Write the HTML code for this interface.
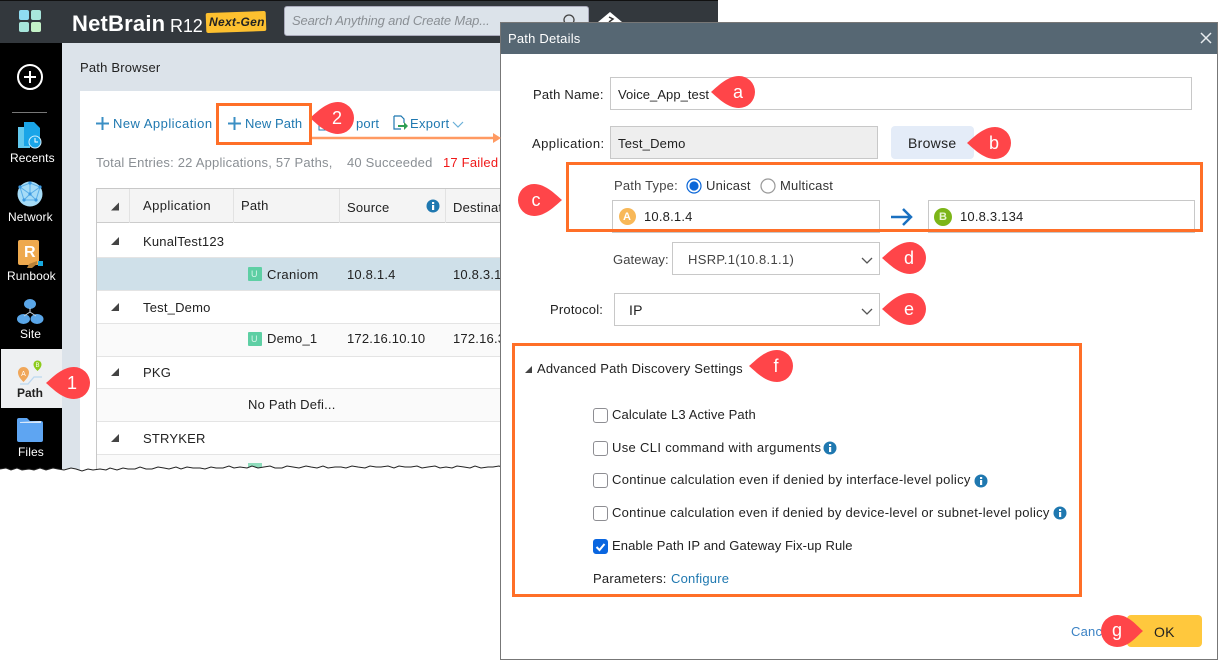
<!DOCTYPE html>
<html><head><meta charset="utf-8"><style>
html,body{margin:0;padding:0;background:#fff}
#p{position:relative;width:1218px;height:660px;overflow:hidden;background:#fff;font-family:"Liberation Sans",sans-serif;font-size:13px;color:#222}
#p div{position:absolute;box-sizing:border-box}
.t{position:absolute;white-space:nowrap;line-height:16px;letter-spacing:.2px}
.w{color:#fff;font-size:12px;letter-spacing:.1px}
.b{color:#1f78b0}
.g{color:#8a8f94}
.i{border:1px solid #c8c8c8;background:#fff}
.o{border:3px solid #ff6f28}
.h{height:1px;background:#e4e4e4;left:97px;width:403px}
.v{width:1px;background:#e2e2e2;top:189px;height:34px}
.c{width:15px;height:15px;left:593px;border:1px solid #8e8e93;border-radius:3px;background:#fff}
svg{position:absolute;overflow:visible}
</style></head><body><div id="p">

<div style="left:0;top:0;width:718px;height:470px;background:#dce3ea"></div>
<div style="left:0;top:0;width:718px;height:43px;background:#33383d;border-top:1px solid #111"></div>
<div style="left:0;top:43px;width:62px;height:427px;background:#000"></div>
<div style="left:80px;top:91px;width:440px;height:379px;background:#fff"></div>

<div style="left:19px;top:10px;width:10px;height:10px;background:#8fdcf2;border-radius:2px"></div>
<div style="left:31px;top:10px;width:10px;height:10px;background:#a8e6dc;border-radius:2px"></div>
<div style="left:19px;top:22px;width:10px;height:10px;background:#a8e6dc;border-radius:2px"></div>
<div style="left:31px;top:22px;width:10px;height:10px;background:#c4f2c8;border-radius:2px"></div>
<span class="t" style="left:72px;top:12px;color:#fff;font-size:22px;font-weight:bold;letter-spacing:.2px;line-height:24px">NetBrain</span>
<span class="t" style="left:170px;top:14px;color:#fff;font-size:18px;letter-spacing:-.1px;line-height:24px">R12</span>
<div style="left:206px;top:12px;width:60px;height:20px;background:#fdc02f;transform:rotate(-2deg);border-radius:2px"></div>
<span class="t" style="left:209px;top:14px;color:#222;font-size:12px;font-weight:bold;font-style:italic;letter-spacing:.3px">Next-Gen</span>
<div style="left:284px;top:6px;width:305px;height:30px;background:#dce3ea;border:1px solid #aab;border-radius:3px"></div>
<span class="t" style="left:292px;top:13px;font-style:italic;color:#8a8f94;font-size:13px;letter-spacing:-.15px">Search Anything and Create Map...</span>
<svg style="left:0;top:0" width="720" height="50"><circle cx="569" cy="20" r="5" fill="none" stroke="#444" stroke-width="1.3"/><path d="M610 12L622 22H598Z" fill="#fff"/><path d="M609 17l4 2-4 3" fill="none" stroke="#333" stroke-width="1.5"/></svg>

<svg style="left:0;top:0" width="62" height="470">
<circle cx="30" cy="77" r="12" fill="none" stroke="#fff" stroke-width="2"/><path d="M24 77H36M30 71V83" stroke="#fff" stroke-width="2"/>
<rect x="12" y="112" width="35" height="1" fill="#777"/>
<path d="M18 127h12v21H18z" fill="#62c9ee"/><path d="M24 122h10l6 6v18H24z" fill="#1aa5e8"/><circle cx="35" cy="142" r="6" fill="#1aa5e8" stroke="#cfefff"/><path d="M35 138v4h3" stroke="#fff" fill="none"/>
<circle cx="30" cy="194" r="12.5" fill="#a6dcf7"/><path d="M20 187L30 183 40 187 36 200 24 200ZM30 183V194M20 187L30 194 40 187M24 200L30 194 36 200" stroke="#58aee8" stroke-width="1" fill="none"/><g fill="#3d9ae2"><circle cx="20" cy="187" r="1.6"/><circle cx="40" cy="187" r="1.6"/><circle cx="30" cy="183" r="1.6"/><circle cx="24" cy="200" r="1.6"/><circle cx="36" cy="200" r="1.6"/><circle cx="30" cy="194" r="1.6"/></g>
<rect x="18" y="240" width="21" height="25" rx="2" fill="#eea94e"/><rect x="38" y="261" width="5" height="5" fill="#17a9e0"/><path d="M29 264l8-3v3l-5 4h-5z" fill="#b98238"/>
<g fill="#5aa6e8"><ellipse cx="30" cy="304" rx="6" ry="5"/><ellipse cx="23.500" cy="319" rx="6.500" ry="5"/><ellipse cx="37" cy="319" rx="6.500" ry="5"/></g><path d="M30 308v4l-6 4M30 312l6 4" stroke="#c8d4de" fill="none"/>
</svg>
<span class="t" style="left:24px;top:245px;color:#fff;font-weight:bold;font-size:16px">R</span>
<span class="t w" style="left:10px;top:150px">Recents</span>
<span class="t w" style="left:8px;top:209px">Network</span>
<span class="t w" style="left:7px;top:268px">Runbook</span>
<span class="t w" style="left:20px;top:326px">Site</span>
<div style="left:1px;top:349px;width:61px;height:59px;background:#eef0f2"></div>
<svg style="left:0;top:349px" width="62" height="50">
<path d="M23.500 33c-3-3-5.500-6-5.500-9.500a5.500 5.500 0 0 1 11 0c0 3.500-2.500 6.500-5.500 9.500z" fill="#f0a75a"/>
<path d="M37.500 22c-2-2-4-4-4-6.500a4 4 0 0 1 8 0c0 2.500-2 4.500-4 6.500z" fill="#8ccb1a"/>
<path d="M20 35h8l6-7h8" fill="none" stroke="#bcd8f0" stroke-width="1.3"/>
<text x="23.500" y="27" font-size="7" fill="#fff" text-anchor="middle" font-family="Liberation Sans, sans-serif">A</text>
<text x="37.500" y="18" font-size="6" fill="#fff" text-anchor="middle" font-family="Liberation Sans, sans-serif">B</text></svg>
<span class="t" style="left:17px;top:385px;font-size:12px;font-weight:bold;letter-spacing:0;color:#222">Path</span>
<svg style="left:0;top:410px" width="62" height="40"><path d="M17 10a2 2 0 0 1 2-2h8l3 3h11a2 2 0 0 1 2 2v17a2 2 0 0 1-2 2H19a2 2 0 0 1-2-2z" fill="#5ea5f2"/><path d="M20 12l21-1v2H20z" fill="#d8e8fa"/></svg>
<span class="t w" style="left:18px;top:444px">Files</span>

<span class="t" style="left:80px;top:60px;color:#222">Path Browser</span>
<svg style="left:96px;top:110px" width="230" height="30"><path d="M6.500 7V20M0 13.500H13M138.500 7V20M132 13.500H145" stroke="#3b8fc4" stroke-width="2"/></svg>
<span class="t b" style="left:113px;top:116px;letter-spacing:.47px">New Application</span>
<span class="t b" style="left:245px;top:116px;letter-spacing:.1px">New Path</span>
<svg style="left:318px;top:116px" width="14" height="16"><rect x="1" y="2" width="11" height="12" fill="none" stroke="#1f78b0"/></svg>
<span class="t b" style="left:356px;top:116px">port</span>
<svg style="left:392px;top:115px" width="16" height="16"><path d="M2 1h7l3 3v4M2 1v13h7" fill="none" stroke="#1f78b0" stroke-width="1.2"/><path d="M6 10h6V7l4 4-4 4v-3H6z" fill="#2e9e54"/></svg>
<span class="t b" style="left:410px;top:116px;letter-spacing:.3px">Export</span>
<svg style="left:452px;top:120px" width="12" height="8"><path d="M1 2l5 5 5-5" fill="none" stroke="#6bb0d8" stroke-width="1.2"/></svg>
<span class="t g" style="left:96px;top:155px">Total Entries: 22 Applications, 57 Paths,</span>
<span class="t g" style="left:347px;top:155px">40 Succeeded</span>
<span class="t" style="left:443px;top:155px;color:#f01818">17 Failed</span>

<div style="left:96px;top:188px;width:404px;height:282px;border-left:1px solid #c8c8c8;border-top:1px solid #c8c8c8"></div>
<div style="left:97px;top:189px;width:403px;height:34px;background:#f4f4f4;border-bottom:1px solid #ccc"></div>
<div class="v" style="left:129px"></div><div class="v" style="left:233px"></div><div class="v" style="left:339px"></div><div class="v" style="left:445px"></div>
<div style="left:97px;top:257px;width:403px;height:33px;background:#cfe0e9"></div>
<div style="left:97px;top:323px;width:403px;height:33px;background:#fafafa"></div>
<div style="left:97px;top:388px;width:403px;height:33px;background:#fafafa"></div>
<div style="left:97px;top:454px;width:403px;height:16px;background:#fafafa"></div>
<div class="h" style="top:257px"></div><div class="h" style="top:290px"></div><div class="h" style="top:323px"></div><div class="h" style="top:356px"></div><div class="h" style="top:388px"></div><div class="h" style="top:421px"></div><div class="h" style="top:454px"></div>
<svg style="left:110px;top:200px" width="12" height="250" fill="#444"><path d="M9 2.500v8H1z"/><path d="M9 37v8H1z"/><path d="M9 103v8H1z"/><path d="M9 168v8H1z"/><path d="M9 234v8H1z"/></svg>
<span class="t" style="left:143px;top:198px;letter-spacing:.4px">Application</span>
<span class="t" style="left:241px;top:198px">Path</span>
<span class="t" style="left:347px;top:200px">Source</span>
<svg style="left:426px;top:199px" width="14" height="14"><circle cx="7" cy="7" r="6.500" fill="#1f78b0"/><rect x="6" y="6" width="2.200" height="5" fill="#fff"/><rect x="6" y="3" width="2.200" height="2" fill="#fff"/></svg>
<span class="t" style="left:453px;top:200px">Destinat</span>
<span class="t" style="left:143px;top:234px">KunalTest123</span>
<div style="left:248px;top:267px;width:14px;height:14px;background:#5ecfa4;border-radius:1px"></div><span class="t" style="left:251px;top:266px;color:#d8f5ea;font-size:9px">U</span>
<span class="t" style="left:267px;top:267px;letter-spacing:.35px">Craniom</span><span class="t" style="left:347px;top:267px">10.8.1.4</span><span class="t" style="left:453px;top:267px">10.8.3.1</span>
<span class="t" style="left:143px;top:300px">Test_Demo</span>
<div style="left:248px;top:332px;width:14px;height:14px;background:#5ecfa4;border-radius:1px"></div><span class="t" style="left:251px;top:331px;color:#d8f5ea;font-size:9px">U</span>
<span class="t" style="left:267px;top:331px">Demo_1</span><span class="t" style="left:347px;top:331px">172.16.10.10</span><span class="t" style="left:453px;top:331px">172.16.3</span>
<span class="t" style="left:143px;top:365px">PKG</span>
<span class="t" style="left:248px;top:397px">No Path Defi...</span>
<span class="t" style="left:143px;top:431px">STRYKER</span>
<div style="left:248px;top:463px;width:14px;height:7px;background:#8fdcbc"></div>

<div style="left:0;top:470px;width:500px;height:12px;background:#fff"></div>
<svg style="left:0;top:462px" width="502" height="14"><path d="M0 7l6-1 5 2 6-2 5 2 7-1 5 1 6-2 6 2 7-2 5 1 6 1 7-2 5 1 6 2 6-2 5 1 7-1 6 1 4-2 7 2 6-2 5 1 7 0 5-2 6 2 6 0 6-2 6 1 5 1 7-2 5 2 6-2 6 1 7 0 5 1 6-2 5 1 7 0 6-2 5 2 6-1 7 1 5-2 6 2 6-1 6-1 5 2 7 0 5-2 6 1 6 1 7-2 5 1 6 1 6-2 5 2 7-1 6 0 5 1 6-2 6 1 7 1 5-2 6 1 5 0 7-1 6 2 5-2 6 1 6 0 6-1 5 2 6-1 7-1 5 2 6-1 6 1 5-2 7 1 6 1 5-2 6 2 7-1 5 0 6-1 5 2V14H0Z" fill="#fff" stroke="none"/><path d="M0 7l6-1 5 2 6-2 5 2 7-1 5 1 6-2 6 2 7-2 5 1 6 1 7-2 5 1 6 2 6-2 5 1 7-1 6 1 4-2 7 2 6-2 5 1 7 0 5-2 6 2 6 0 6-2 6 1 5 1 7-2 5 2 6-2 6 1 7 0 5 1 6-2 5 1 7 0 6-2 5 2 6-1 7 1 5-2 6 2 6-1 6-1 5 2 7 0 5-2 6 1 6 1 7-2 5 1 6 1 6-2 5 2 7-1 6 0 5 1 6-2 6 1 7 1 5-2 6 1 5 0 7-1 6 2 5-2 6 1 6 0 6-1 5 2 6-1 7-1 5 2 6-1 6 1 5-2 7 1 6 1 5-2 6 2 7-1 5 0 6-1 5 2" fill="none" stroke="#222" stroke-width="1"/></svg>

<div style="left:500px;top:22px;width:718px;height:638px;background:#fff;border:1px solid #777"></div>
<div style="left:501px;top:23px;width:716px;height:31px;background:#566773"></div>
<span class="t" style="left:508px;top:31px;color:#fff">Path Details</span>
<svg style="left:1200px;top:32px" width="12" height="12"><path d="M1 1L11 11M11 1L1 11" stroke="#e8ecef" stroke-width="1.500"/></svg>

<svg style="left:300px;top:130px" width="210" height="16"><path d="M12 8H194" stroke="#ff9a62" stroke-width="2.500"/><path d="M193 3l8 5-8 5z" fill="#ff9a62"/></svg>

<span class="t" style="left:533px;top:87px">Path Name:</span>
<div class="i" style="left:610px;top:77px;width:582px;height:33px"></div>
<span class="t" style="left:618px;top:87px;letter-spacing:.05px">Voice_App_test</span>
<span class="t" style="left:532px;top:136px;letter-spacing:.45px">Application:</span>
<div class="i" style="left:610px;top:126px;width:268px;height:33px;background:#eee"></div>
<span class="t" style="left:618px;top:136px">Test_Demo</span>
<div style="left:891px;top:126px;width:83px;height:33px;background:#e4ecf8;border-radius:4px"></div>
<span class="t" style="left:908px;top:135px;font-size:14px;letter-spacing:.3px">Browse</span>

<span class="t" style="left:614px;top:178px;color:#444">Path Type:</span>
<svg style="left:686px;top:178px" width="96" height="16"><circle cx="8" cy="8" r="7" fill="#fff" stroke="#0a66d8" stroke-width="1.200"/><circle cx="8" cy="8" r="4.600" fill="#0a66d8"/><circle cx="82" cy="8" r="7" fill="#fff" stroke="#999" stroke-width="1.200"/></svg>
<span class="t" style="left:706px;top:178px;color:#333">Unicast</span>
<span class="t" style="left:780px;top:178px;color:#333">Multicast</span>
<div class="i" style="left:612px;top:200px;width:268px;height:33px"></div>
<div style="left:619px;top:208px;width:17px;height:17px;border-radius:50%;background:#f8b858"></div>
<span class="t" style="left:623px;top:209px;color:#fff;font-size:11px;font-weight:bold">A</span>
<span class="t" style="left:644px;top:209px">10.8.1.4</span>
<svg style="left:890px;top:207px" width="24" height="20"><path d="M1 10H21M13 2l8 8-8 8" fill="none" stroke="#1a70c0" stroke-width="2.500"/></svg>
<div class="i" style="left:928px;top:200px;width:267px;height:33px"></div>
<div style="left:934px;top:208px;width:18px;height:18px;border-radius:50%;background:#7cb518"></div>
<span class="t" style="left:939px;top:209px;color:#e8f5d0;font-size:11px;font-weight:bold">B</span>
<span class="t" style="left:960px;top:209px">10.8.3.134</span>
<div class="o" style="left:566px;top:162px;width:637px;height:70px"></div>

<span class="t" style="left:613px;top:252px;color:#444;letter-spacing:.1px">Gateway:</span>
<div class="i" style="left:672px;top:242px;width:208px;height:33px"></div>
<span class="t" style="left:688px;top:252px;color:#444;letter-spacing:.33px">HSRP.1(10.8.1.1)</span>
<span class="t" style="left:550px;top:302px">Protocol:</span>
<div class="i" style="left:614px;top:293px;width:266px;height:33px"></div>
<span class="t" style="left:629px;top:302px;font-size:14px">IP</span>
<svg style="left:860px;top:256px" width="14" height="60"><path d="M2 2l5 5 5-5M2 53l5 5 5-5" fill="none" stroke="#555" stroke-width="1.300"/></svg>

<div class="o" style="left:512px;top:343px;width:570px;height:254px"></div>
<svg style="left:524px;top:365px" width="9" height="9"><path d="M8 1v7H1z" fill="#444"/></svg>
<span class="t" style="left:537px;top:361px">Advanced Path Discovery Settings</span>
<div class="c" style="top:408px"></div><span class="t" style="left:612px;top:407px;letter-spacing:.12px">Calculate L3 Active Path</span>
<div class="c" style="top:441px"></div><span class="t" style="left:612px;top:440px;letter-spacing:.33px">Use CLI command with arguments</span>
<div class="c" style="top:473px"></div><span class="t" style="left:612px;top:472px;letter-spacing:.3px">Continue calculation even if denied by interface-level policy</span>
<div class="c" style="top:506px"></div><span class="t" style="left:612px;top:505px;letter-spacing:.28px">Continue calculation even if denied by device-level or subnet-level policy</span>
<div class="c" style="top:539px;background:#0a66e0;border-color:#0a66e0"></div>
<svg style="left:593px;top:539px" width="15" height="15"><path d="M3.500 8l3 3 5-6" fill="none" stroke="#fff" stroke-width="2"/></svg>
<span class="t" style="left:612px;top:538px;letter-spacing:.1px">Enable Path IP and Gateway Fix-up Rule</span>
<span class="t" style="left:593px;top:571px;letter-spacing:.25px">Parameters:</span><span class="t b" style="left:671px;top:571px">Configure</span>
<svg style="left:0;top:0" width="1218" height="660">
<g fill="#1f78b0"><circle cx="830" cy="448" r="6.500"/><circle cx="981" cy="481" r="6.500"/><circle cx="1060" cy="513" r="6.500"/></g>
<g fill="#fff"><rect x="829" y="447" width="2.200" height="5"/><rect x="829" y="444" width="2.200" height="2"/><rect x="980" y="480" width="2.200" height="5"/><rect x="980" y="477" width="2.200" height="2"/><rect x="1059" y="512" width="2.200" height="5"/><rect x="1059" y="509" width="2.200" height="2"/></g>
</svg>

<span class="t" style="left:1071px;top:624px;color:#3b82c4">Cancel</span>
<div style="left:1127px;top:615px;width:75px;height:32px;background:#ffc83d;border-radius:4px"></div>
<span class="t" style="left:1154px;top:624px;color:#222;font-size:14px">OK</span>

<svg style="left:0;top:0" width="1218" height="660" fill="#ff4549">
<path transform="translate(74 383)" d="M-28 0C-22-5-12-16 0-16A16 16 0 0 1 0 16C-12 16-22 5-28 0Z"/>
<path transform="translate(338 118)" d="M-28 0C-22-5-12-16 0-16A16 16 0 0 1 0 16C-12 16-22 5-28 0Z"/>
<path transform="translate(739 92)" d="M-28 0C-22-5-12-16 0-16A16 16 0 0 1 0 16C-12 16-22 5-28 0Z"/>
<path transform="translate(995 143)" d="M-28 0C-22-5-12-16 0-16A16 16 0 0 1 0 16C-12 16-22 5-28 0Z"/>
<path transform="translate(910 258)" d="M-28 0C-22-5-12-16 0-16A16 16 0 0 1 0 16C-12 16-22 5-28 0Z"/>
<path transform="translate(910 309)" d="M-28 0C-22-5-12-16 0-16A16 16 0 0 1 0 16C-12 16-22 5-28 0Z"/>
<path transform="translate(777 366)" d="M-28 0C-22-5-12-16 0-16A16 16 0 0 1 0 16C-12 16-22 5-28 0Z"/>
<path transform="translate(534 200) scale(-1 1)" d="M-28 0C-22-5-12-16 0-16A16 16 0 0 1 0 16C-12 16-22 5-28 0Z"/>
<path transform="translate(1117 631) scale(-1 1)" d="M-26 0C-20-5-12-16 0-16A16 16 0 0 1 0 16C-12 16-20 5-26 0Z"/>
<g fill="#fff" font-family="Liberation Sans, sans-serif" font-size="18" text-anchor="middle">
<text x="72" y="389">1</text><text x="337" y="124">2</text><text x="738" y="98">a</text><text x="994" y="149">b</text><text x="536" y="206">c</text><text x="909" y="264">d</text><text x="909" y="315">e</text><text x="776" y="372">f</text><text x="1117" y="636">g</text>
</g></svg>

<div class="o" style="left:216px;top:103px;width:96px;height:42px"></div>
</div></body></html>
